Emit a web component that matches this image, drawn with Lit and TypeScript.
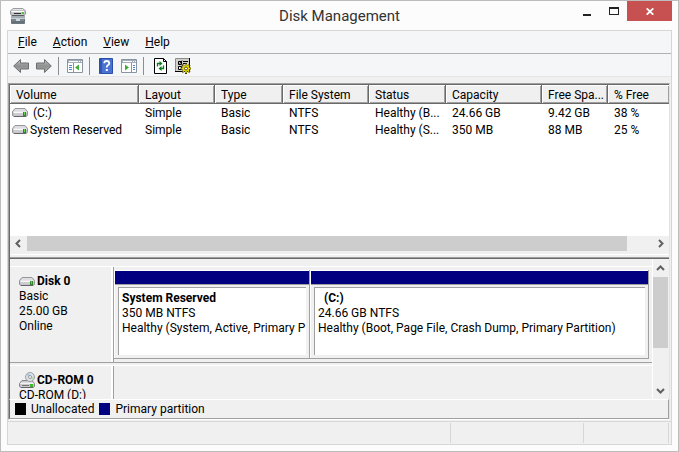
import { LitElement, html, css, svg, nothing } from "lit";
import { customElement } from "lit/decorators.js";

const drive = html`<svg class="drive" width="16" height="11" viewBox="0 0 16 11" aria-hidden="true">
  <path d="M3 1.500H13L15.500 4.500V8.500L14 9.500H2L.5 8.500V4.500Z" fill="#c0c0c4" stroke="#97979b"/>
  <path d="M3.500 2H12.500L14.500 4.500H1.500Z" fill="#dedee2"/>
  <path d="M1.500 4.500H14.500V6H1.500Z" fill="#fafafa"/>
  <path d="M2 6H14V8.500H2Z" fill="#cdcdd1"/>
  <path d="M2 9.500H14" stroke="#66666a"/>
  <path d="M11 5H14V9H11Z" fill="#2e8a26"/><path d="M12 5H13V8H12Z" fill="#63d14e"/>
</svg>`;

const cdDrive = html`<svg class="drive" width="16" height="16" viewBox="0 0 16 16" aria-hidden="true">
  <path d="M3 8.500H13L15.500 11.500V14.500L14 15.500H2L.5 14.500V11.500Z" fill="#c9c9cc" stroke="#858588"/>
  <circle cx="11" cy="5" r="4.500" fill="#dcdfe4" stroke="#9d9fa3"/>
  <path d="M11 5L7.500 3L10 1Z" fill="#a9c8e6"/><path d="M11 5L14 8L15 5Z" fill="#b9dcb1"/>
  <circle cx="11" cy="5" r="1.500" fill="#fff" stroke="#95989c"/>
  <path d="M2 10.500H14L15 12H1Z" fill="#f2f2f4"/>
  <path d="M3 13.500H10" stroke="#77777a"/><path d="M2 15.500H14" stroke="#66666a"/><path d="M11 12H14V15H11Z" fill="#42b52f"/>
</svg>`;

const appIcon = html`<svg width="16" height="16" viewBox="0 0 16 16" aria-hidden="true">
  <path d="M1.500 9.500H14.500V15.500H1.500Z" fill="#7c878e" stroke="#6d777e"/>
  <path d="M1 7H15V10H1Z" fill="#a3adb3"/>
  <path d="M1 10.500H15" stroke="#c5ced3"/><path d="M2 13H14V15H2Z" fill="#65717a"/><path d="M6 11H10V13H6Z" fill="#cfd8dd"/>
  <path d="M3 .5H13L15.500 3V6L14 7.500H2L.5 6V3Z" fill="#c3c5c7" stroke="#9a9da0"/>
  <path d="M3 1.500H13" stroke="#e4e4e6"/><path d="M1.500 3.500H14" stroke="#fff"/>
  <path d="M4 5H11V6H4Z" fill="#303234"/><path d="M2 7.500H14" stroke="#5c5f62"/><path d="M12 4H14V6H12Z" fill="#4fc33b"/>
</svg>`;

const arrow = (flip: boolean) => html`<svg width="16" height="16" viewBox="0 0 16 16" aria-hidden="true">
  <defs><linearGradient id="g" x1="0" y1="0" x2="0" y2="1">
    <stop offset="0" stop-color="#c3c3c3"/><stop offset=".5" stop-color="#8f8f8f"/><stop offset="1" stop-color="#adadad"/>
  </linearGradient></defs>
  <path transform=${flip ? "translate(16 0) scale(-1 1)" : (nothing as any)}
    d="M.7 8L7.500 1.500V5H15.500V11H7.500V14.500Z" fill="url(#g)" stroke="#6f6f6f"/>
</svg>`;

const paneIcon = (right: boolean) => html`<svg width="16" height="14" viewBox="0 0 16 14" aria-hidden="true">
  <path d="M.5 .5H15.500V13.500H.5Z" fill="#fff" stroke="#8a949e"/>
  <path d="M1 1H15V4H1Z" fill="#a3afba"/><path d="M2 2H11V3H2Z" fill="#fff"/>
  <path d="M12 2H13V3H12ZM14 2H15V3H14Z" fill="#fff"/>
  ${right
    ? svg`<path d="M10.500 4V13" stroke="#8a949e"/><path d="M12 6.500H14M12 8.500H14M12 10.500H14" stroke="#4f86c6"/>
        <path d="M4 5.500L8 8.500L4 11.500Z" fill="#3fae38"/>`
    : svg`<path d="M6.500 4V13" stroke="#8a949e"/><path d="M2 6.500H5M2 8.500H5M2 10.500H5" stroke="#4f86c6"/>
        <path d="M12 5.500L8 8.500L12 11.500Z" fill="#3fae38"/>`}
</svg>`;

const helpIcon = html`<svg width="14" height="16" viewBox="0 0 14 16" aria-hidden="true">
  <path d="M.5 .5H13.500V15.500H.5Z" fill="#4a72d0" stroke="#2b4fa8"/><path d="M1 1H3V15H1Z" fill="#2f55b5"/>
  <path d="M5.300 5.200Q5.300 3 7.700 3Q10.200 3 10.200 5.200Q10.200 6.500 8.800 7.300Q7.700 8 7.700 9.500" fill="none" stroke="#fff" stroke-width="1.800"/>
  <path d="M6.800 11H8.800V13H6.800Z" fill="#fff"/>
</svg>`;

const refreshIcon = html`<svg width="13" height="16" viewBox="0 0 13 16" aria-hidden="true">
  <path d="M.5 .5H9.500L12.500 3.500V15.500H.5Z" fill="#fff" stroke="#000"/><path d="M9.500 .5V3.500H12.500" fill="none" stroke="#000"/>
  <path d="M3.500 8.500V5.500H6M9.500 7.500V10.500H7" fill="none" stroke="#0b7a1c" stroke-width="1.300"/>
  <path d="M5.500 3L8.500 5.500L5.500 8ZM7.500 8L4.500 10.500L7.500 13Z" fill="#0b7a1c"/>
</svg>`;

const settingsIcon = html`<svg width="16" height="16" viewBox="0 0 16 16" aria-hidden="true">
  <path d="M.5 .5H14.500V13.500H.5Z" fill="#d0d0cc" stroke="#8c8c88"/><path d="M14.500 0V13.500H0" fill="none" stroke="#000"/>
  <path d="M3.500 3.500H6.500V6.500H3.500ZM3.500 8.500H6.500V11.500H3.500Z" fill="#fff" stroke="#000"/>
  <path d="M8 3.500H13M8 5.500H12M8 8.500H10" stroke="#000"/><path d="M4 4.500L5 5.500L7 2.500" fill="none" stroke="#000"/>
  <path d="M11 5V16M5.500 10.500H16M7.200 6.700L14.800 14.300M14.800 6.700L7.200 14.300" stroke="#3a3400" stroke-width="2"/>
  <path d="M11 6V15M6.500 10.500H15.500M8 7.500L14 13.500M14 7.500L8 13.500" stroke="#f0e000" stroke-width="1.300"/>
  <circle cx="11" cy="10.500" r="3" fill="#f0e000"/><circle cx="11" cy="10.500" r="1.500" fill="#fff" stroke="#5a5200"/>
</svg>`;

const chevrons: Record<string, string> = {
  left: "M6 1L2.500 4.500L6 8",
  right: "M3 1L6.500 4.500L3 8",
  up: "M1 6L4.500 2.500L8 6",
  down: "M1 3L4.500 6.500L8 3",
};

const chevron = (dir: string) => html`<svg width="9" height="9" viewBox="0 0 9 9" aria-hidden="true">
  <path d=${chevrons[dir]} fill="none" stroke="#606060" stroke-width="2"/>
</svg>`;

const columns = ["Volume", "Layout", "Type", "File System", "Status", "Capacity", "Free Spa...", "% Free"];
const volumes = [
  [" (C:)", "Simple", "Basic", "NTFS", "Healthy (B...", "24.66 GB", "9.42 GB", "38 %"],
  ["System Reserved", "Simple", "Basic", "NTFS", "Healthy (S...", "350 MB", "88 MB", "25 %"],
];

@customElement("app-root")
export class AppRoot extends LitElement {
  static styles = css`
    :host {
      display: flex;
      flex-direction: column;
      box-sizing: border-box;
      min-height: 100vh;
      padding: 0 6px 6px;
      border: 1px solid #bdbdbd;
      background: #fcfcfc;
      color: #000;
      font: 12px/16px Roboto, "Open Sans", sans-serif;
    }
    * { box-sizing: border-box; }
    svg { display: block; flex: none; }
    button {
      display: flex;
      align-items: center;
      justify-content: center;
      margin: 0;
      padding: 0;
      border: 0;
      background: none;
      color: inherit;
      font: inherit;
    }
    .titlebar {
      display: grid;
      grid-template-columns: 1fr auto 1fr;
      height: 29px;
    }
    .titlebar > svg { margin: 7px 0 0 3px; }
    h1 {
      margin: 0;
      color: #333;
      font-size: 15px;
      font-weight: 400;
      line-height: 30px;
    }
    .controls { display: flex; justify-content: flex-end; height: 20px; }
    .controls button { width: 27px; }
    .controls .close { width: 45px; background: #c75050; }
    .client {
      flex: 1;
      display: flex;
      flex-direction: column;
      border: 1px solid #d6d6d6;
      background: #f0f0f0;
    }
    .menubar {
      display: flex;
      gap: 16px;
      height: 23px;
      padding: 0 10px;
      border-bottom: 1px solid #adb1b7;
      background: #f5f6f7;
    }
    .toolbar {
      display: flex;
      align-items: center;
      gap: 7px;
      height: 23px;
      padding: 2px 5px 0;
      border-bottom: 1px solid #e5e5e5;
      background: #f5f6f7;
    }
    .toolbar button { width: 16px; }
    .sep { width: 1px; height: 18px; margin: 0 1px 0 -1px; background: #8d8d8d; }
    .console {
      flex: 1;
      display: flex;
      flex-direction: column;
      margin: 6px 1px 1px 0;
      border: 1px solid #a0a0a0;
      border-right-color: #e3e3e3;
      border-bottom-color: #fff;
    }
    .list {
      display: flex;
      flex-direction: column;
      height: 175px;
      border-top: 1px solid #696969;
      border-left: 1px solid #696969;
      border-bottom: 1px solid #696969;
    }
    .rows { flex: 1; background: #fff; }
    table {
      width: 100%;
      border-collapse: separate;
      border-spacing: 0;
      table-layout: fixed;
    }
    th, td {
      overflow: hidden;
      padding: 0 0 0 6px;
      font-weight: 400;
      text-align: left;
      white-space: pre;
    }
    th {
      height: 19px;
      padding-top: 2px;
      border-right: 1px solid #696969;
      border-bottom: 1px solid #696969;
      background: #f0f0f0;
      box-shadow: inset 1px 1px #fff, inset -1px -1px #a0a0a0;
    }
    th:last-child { border-right: 0; }
    td { height: 17px; }
    td:first-child { padding-left: 2px; }
    .c0 { width: 129px; }
    .c1 { width: 76px; }
    .c2 { width: 68px; }
    .c3 { width: 86px; }
    .c4 { width: 77px; }
    .c5 { width: 96px; }
    .c6 { width: 66px; }
    .name { display: flex; align-items: center; gap: 2px; }
    .hscroll { display: flex; height: 15px; background: #f0f0f0; }
    .hscroll button { width: 17px; }
    .hscroll .track { flex: 1; }
    .hscroll .thumb { width: 96%; height: 100%; background: #cdcdcd; }
    .splitter {
      height: 7px;
      border-bottom: 1px solid #a0a0a0;
      background: linear-gradient(#f0f0f0 3px, #fff 3px 4px, #f0f0f0 4px);
    }
    .graph {
      flex: 1 0 140px;
      display: flex;
      height: 140px;
      border-left: 1px solid #696969;
      padding-right: 1px;
    }
    .disks {
      flex: 1;
      height: 140px;
      padding-top: 7px;
      overflow: hidden;
      border-right: 1px solid #fff;
    }
    .disk {
      display: grid;
      grid-template-columns: 103px 1fr;
      height: 97px;
      border-top: 1px solid #fff;
      border-bottom: 1px solid #a0a0a0;
    }
    .disk + .disk { margin-top: 2px; }
    .label {
      padding: 6px 0 0 9px;
      border-right: 2px solid #fff;
      line-height: 15px;
    }
    .label h2 {
      display: flex;
      align-items: center;
      gap: 2px;
      height: 16px;
      margin: 0;
      font-size: 12px;
    }
    .parts {
      display: grid;
      grid-template-columns: 196px 1fr;
      padding: 3px 3px 3px 0;
      border-left: 1px solid #a0a0a0;
    }
    .part {
      display: flex;
      flex-direction: column;
      min-width: 0;
      border: 1px solid #a0a0a0;
      border-width: 0 1px 1px 0;
      box-shadow: inset 1px 1px #fff;
      padding: 1px 0 0 1px;
    }
    .stripe { height: 14px; background: #000080; border-bottom: 1px solid #a0a0a0; }
    .info {
      flex: 1;
      margin: 2px 3px 3px;
      padding: 3px 3px 0;
      overflow: hidden;
      border-top: 1px solid #a0a0a0;
      border-left: 1px solid #a0a0a0;
      background: #fff;
      line-height: 15px;
      white-space: pre;
    }
    .empty { border-left: 1px solid #a0a0a0; }
    .vscroll {
      display: flex;
      flex-direction: column;
      width: 15px;
    }
    .vscroll button { height: 18px; }
    .vscroll .track { flex: 1; }
    .vscroll .thumb { height: 68%; background: #cdcdcd; }
    .legend {
      display: flex;
      align-items: center;
      gap: 5px;
      height: 20px;
      margin: 0;
      padding: 0 5px;
      border: 1px solid #a0a0a0;
      border-top-color: #fff;
      border-left-color: #696969;
      list-style: none;
    }
    .legend li { display: flex; align-items: center; gap: 5px; }
    .swatch { width: 11px; height: 12px; }
    .black { background: #000; }
    .navy { background: #000080; }
    .status {
      display: grid;
      grid-template-columns: 1fr 133px 85px;
      height: 23px;
      padding: 1px 2px 1px 0;
      border-top: 1px solid #d7d7d7;
    }
    .status span { border-right: 1px solid #d7d7d7; }
  `;

  render() {
    return html`
      <header class="titlebar">
        ${appIcon}
        <h1>Disk Management</h1>
        <div class="controls">
          <button aria-label="Minimize"><svg width="8" height="10" viewBox="0 0 8 10"><path d="M0 8H8V10H0Z" fill="#222"/></svg></button>
          <button aria-label="Maximize"><svg width="10" height="8" viewBox="0 0 10 8"><path d="M0 0H10V8H0ZM1 2V7H9V2Z" fill="#222" fill-rule="evenodd"/></svg></button>
          <button class="close" aria-label="Close"><svg width="8" height="8" viewBox="0 0 8 8"><path d="M.7 1.300L7.300 7.700M7.300 1.300L.7 7.700" stroke="#fff" stroke-width="1.800"/></svg></button>
        </div>
      </header>
      <main class="client">
        <nav class="menubar">
          <button><span><u>F</u>ile</span></button>
          <button><span><u>A</u>ction</span></button>
          <button><span><u>V</u>iew</span></button>
          <button><span><u>H</u>elp</span></button>
        </nav>
        <div class="toolbar">
          <button aria-label="Back">${arrow(false)}</button>
          <button aria-label="Forward">${arrow(true)}</button>
          <span class="sep"></span>
          <button aria-label="Console tree">${paneIcon(false)}</button>
          <span class="sep"></span>
          <button aria-label="Help">${helpIcon}</button>
          <button aria-label="Action pane">${paneIcon(true)}</button>
          <span class="sep"></span>
          <button aria-label="Refresh">${refreshIcon}</button>
          <button aria-label="Settings">${settingsIcon}</button>
        </div>
        <div class="console">
          <section class="list">
            <div class="rows">
              <table>
                <thead><tr>${columns.map((c, i) => html`<th class="c${i}">${c}</th>`)}</tr></thead>
                <tbody>
                  ${volumes.map((v) => html`<tr>${v.map((t, i) =>
                    i ? html`<td>${t}</td>` : html`<td><span class="name">${drive}<span>${t}</span></span></td>`)}</tr>`)}
                </tbody>
              </table>
            </div>
            <div class="hscroll">
              <button aria-label="Scroll left">${chevron("left")}</button>
              <div class="track"><div class="thumb"></div></div>
              <button aria-label="Scroll right">${chevron("right")}</button>
            </div>
            <div class="splitter"></div>
          </section>
          <section class="graph">
            <div class="disks">
              <article class="disk">
                <div class="label"><h2>${drive}<span>Disk 0</span></h2>Basic<br />25.00 GB<br />Online</div>
                <div class="parts">
                  <div class="part"><div class="stripe"></div><div class="info"><b>System Reserved</b><br />350 MB NTFS<br />Healthy (System, Active, Primary P</div></div>
                  <div class="part"><div class="stripe"></div><div class="info"><b>  (C:)</b><br />24.66 GB NTFS<br />Healthy (Boot, Page File, Crash Dump, Primary Partition)</div></div>
                </div>
              </article>
              <article class="disk">
                <div class="label"><h2>${cdDrive}<span>CD-ROM 0</span></h2>CD-ROM (D:)</div>
                <div class="empty"></div>
              </article>
            </div>
            <div class="vscroll">
              <button aria-label="Scroll up">${chevron("up")}</button>
              <div class="track"><div class="thumb"></div></div>
              <button aria-label="Scroll down">${chevron("down")}</button>
            </div>
          </section>
          <ul class="legend">
            <li><span class="swatch black"></span>Unallocated</li>
            <li><span class="swatch navy"></span>Primary partition</li>
          </ul>
        </div>
        <footer class="status"><span></span><span></span><span></span></footer>
      </main>
    `;
  }
}
